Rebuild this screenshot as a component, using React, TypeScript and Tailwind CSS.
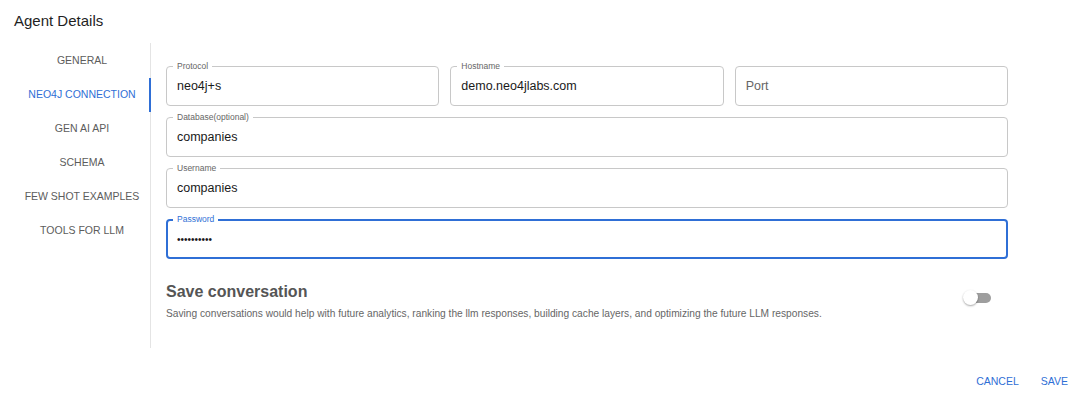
import React from "react";

const tabs = [
  "GENERAL",
  "NEO4J CONNECTION",
  "GEN AI API",
  "SCHEMA",
  "FEW SHOT EXAMPLES",
  "TOOLS FOR LLM",
];

type FieldProps = {
  label?: string;
  value?: string;
  placeholder?: string;
  focused?: boolean;
  secret?: boolean;
  className?: string;
};

const Field = ({ label, value, placeholder, focused, secret, className = "" }: FieldProps) => {
  return (
    <div
      className={`relative h-[40px] rounded-[4px] flex items-center ${
        focused ? "border-2 border-[#2f6fd6] px-[9px]" : "border border-[#c8c8c8] px-[10px]"
      } ${className}`}
    >
      {label && (
        <span
          className={`absolute bg-white px-[4px] text-[8.5px] leading-[10px] ${
            focused ? "text-[#2f6fd6] top-[-7px] left-[5px]" : "text-[#666] top-[-6px] left-[6px]"
          }`}
        >
          {label}
        </span>
      )}
      {value ? (
        <span className={secret ? "text-[10px] text-[#1a1a1a]" : "text-[12.5px] text-[#1a1a1a]"}>
          {value}
        </span>
      ) : (
        <span className="text-[12.5px] text-[#666]">{placeholder}</span>
      )}
    </div>
  );
};

const App = () => {
  return (
    <div className="w-[1080px] h-[396px] bg-white relative font-['Liberation_Sans',Arial,sans-serif]">
      <h1 className="pl-[14px] pt-[11px] text-[15px] leading-[20px] text-[#1f1f1f]">Agent Details</h1>

      <div className="flex mt-[12px]">
        <nav className="w-[151px] h-[305px] pt-[1px] border-r border-[#e4e4e4] flex flex-col">
          {tabs.map((t, i) => (
            <div
              key={t}
              className={`relative h-[34px] pl-[14px] flex items-center justify-center text-[10.5px] ${
                i === 1 ? "text-[#2f6fd6]" : "text-[#5c5c5c]"
              }`}
            >
              {t}
              {i === 1 && <span className="absolute right-[-1px] top-0 h-[34px] w-[2px] bg-[#2f6fd6]" />}
            </div>
          ))}
        </nav>

        <div className="w-[842px] ml-[15px] pt-[23px] flex flex-col gap-[11px]">
          <div className="flex gap-[11px]">
            <Field label="Protocol" value="neo4j+s" className="flex-1" />
            <Field label="Hostname" value="demo.neo4jlabs.com" className="flex-1" />
            <Field placeholder="Port" className="flex-1" />
          </div>
          <Field label="Database(optional)" value="companies" />
          <Field label="Username" value="companies" />
          <Field label="Password" value="••••••••••" focused secret />

          <div className="flex items-start justify-between mt-[12px]">
            <div>
              <h2 className="text-[16px] leading-[20px] font-bold text-[#555]">Save conversation</h2>
              <p className="mt-[6px] text-[10.2px] leading-[12px] text-[#666]">
                Saving conversations would help with future analytics, ranking the llm responses, building cache layers, and optimizing the future LLM responses.
              </p>
            </div>
            <div className="relative w-[30px] h-[16px] mr-[15px] mt-[8px]">
              <span className="absolute left-[2px] top-[3px] w-[26px] h-[10px] rounded-full bg-[#9e9e9e]" />
              <span className="absolute left-0 top-0 w-[15px] h-[15px] rounded-full bg-white shadow-[0_1px_2px_rgba(0,0,0,0.35)]" />
            </div>
          </div>
        </div>
      </div>

      <div className="absolute right-[12px] bottom-[6px] flex gap-[22px] text-[10.5px] text-[#2f6fd6]">
        <span>CANCEL</span>
        <span>SAVE</span>
      </div>
    </div>
  );
};

export default App;
